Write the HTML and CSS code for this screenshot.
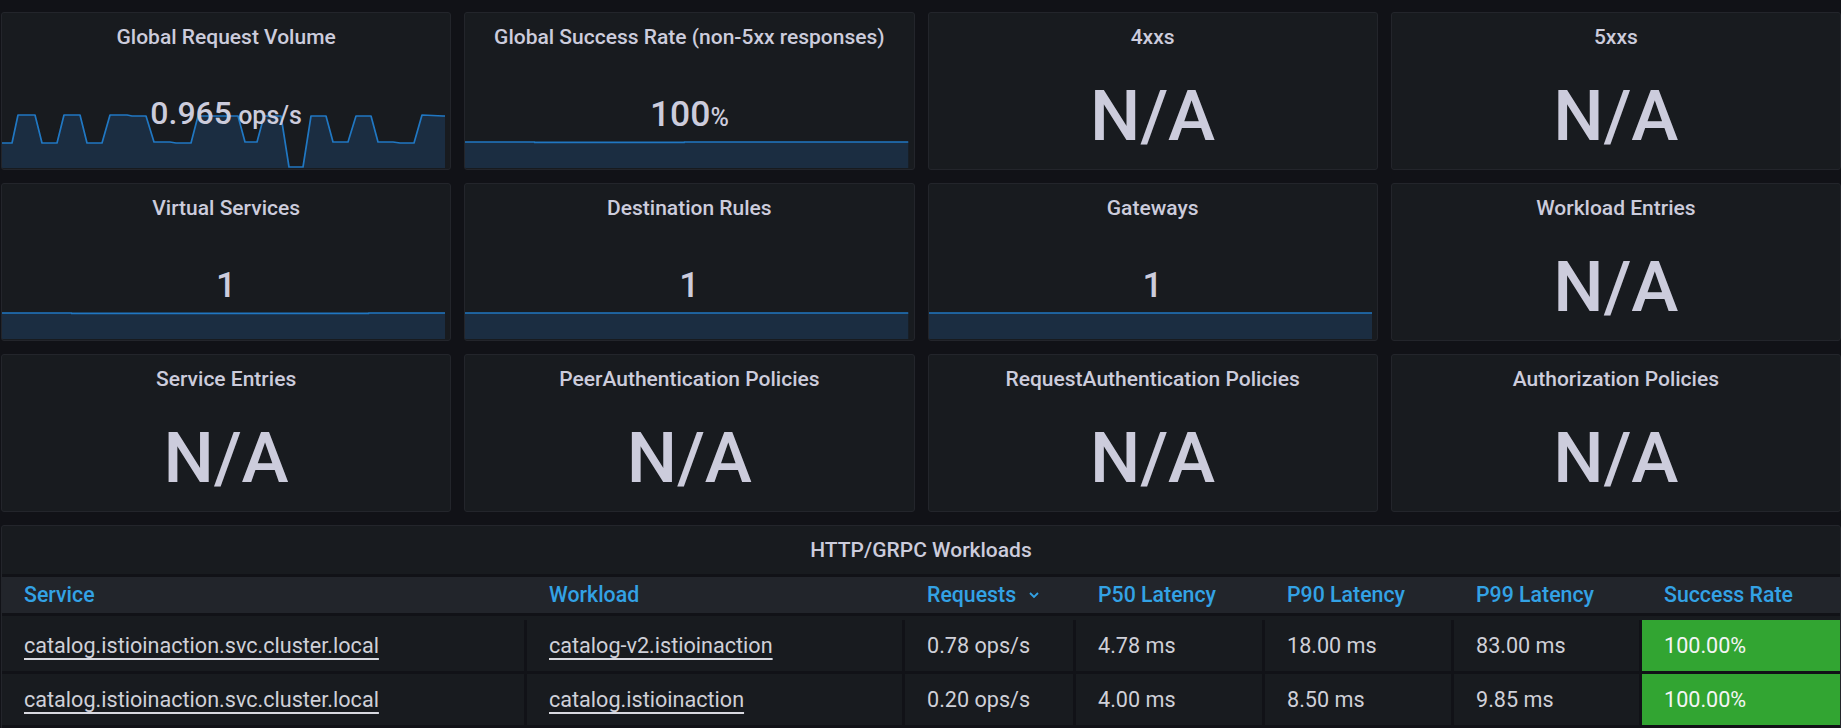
FILE: index.html
```html
<!DOCTYPE html>
<html lang="en">
<head>
<meta charset="utf-8">
<title>Istio Mesh Dashboard</title>
<link rel="stylesheet" href="styles.css">
</head>
<body>
<div class="dash">
  <div class="grid">
    <section class="panel">
      <div class="title">Global Request Volume</div>
      <svg class="graph g-spark" viewBox="0 0 443 56" preserveAspectRatio="none">
        <polygon class="fill" points="0,56 0,31 10,31 16,3 33,3 40,31 55,31 62,3 78,3 85,31 100,31 108,3 125,3 130,4 144,4 152,30 168,30 174,31 189,31 196,4 236,4 243,30 255,30 262,4 279,4 287,56 301,56 309,4 324,4 331,30 346,30 354,4 369,4 376,30 391,30 398,31 412,31 420,3 441,4 443,4 443,56"/>
        <polyline class="line" points="0,31 10,31 16,3 33,3 40,31 55,31 62,3 78,3 85,31 100,31 108,3 125,3 130,4 144,4 152,30 168,30 174,31 189,31 196,4 236,4 243,30 255,30 262,4 279,4 287,55 301,55 309,4 324,4 331,30 346,30 354,4 369,4 376,30 391,30 398,31 412,31 420,3 441,4 443,4"/>
      </svg>
      <div class="value v-spark">0.965<span class="unit-ops"> ops/s</span></div>
    </section>
    <section class="panel">
      <div class="title">Global Success Rate (non-5xx responses)</div>
      <svg class="graph g-flat" viewBox="0 0 445 56" preserveAspectRatio="none">
        <rect class="fill" x="0" y="30" width="445" height="26"/>
        <polyline class="line" points="0,30 70,30 70,30.4 220,30.4 220,30 445,30"/>
      </svg>
      <div class="value v-big">100<span class="unit-pct">%</span></div>
    </section>
    <section class="panel">
      <div class="title">4xxs</div>
      <div class="value na">N/A</div>
    </section>
    <section class="panel">
      <div class="title">5xxs</div>
      <div class="value na">N/A</div>
    </section>

    <section class="panel">
      <div class="title">Virtual Services</div>
      <svg class="graph g-flat" viewBox="0 0 445 56" preserveAspectRatio="none">
        <rect class="fill" x="0" y="30" width="445" height="26"/>
        <polyline class="line" points="0,30 70,30 70,30.4 368,30.4 368,30 445,30"/>
      </svg>
      <div class="value v-big">1</div>
    </section>
    <section class="panel">
      <div class="title">Destination Rules</div>
      <svg class="graph g-flat" viewBox="0 0 445 56" preserveAspectRatio="none">
        <rect class="fill" x="0" y="30" width="445" height="26"/>
        <polyline class="line" points="0,30 445,30"/>
      </svg>
      <div class="value v-big">1</div>
    </section>
    <section class="panel">
      <div class="title">Gateways</div>
      <svg class="graph g-flat" viewBox="0 0 445 56" preserveAspectRatio="none">
        <rect class="fill" x="0" y="30" width="445" height="26"/>
        <polyline class="line" points="0,30 445,30"/>
      </svg>
      <div class="value v-big">1</div>
    </section>
    <section class="panel">
      <div class="title">Workload Entries</div>
      <div class="value na">N/A</div>
    </section>

    <section class="panel">
      <div class="title">Service Entries</div>
      <div class="value na">N/A</div>
    </section>
    <section class="panel">
      <div class="title">PeerAuthentication Policies</div>
      <div class="value na">N/A</div>
    </section>
    <section class="panel">
      <div class="title">RequestAuthentication Policies</div>
      <div class="value na">N/A</div>
    </section>
    <section class="panel">
      <div class="title">Authorization Policies</div>
      <div class="value na">N/A</div>
    </section>
  </div>

  <section class="panel table-panel">
    <div class="title table-title">HTTP/GRPC Workloads</div>
    <div class="thead cols">
      <div class="th">Service</div>
      <div class="th">Workload</div>
      <div class="th">Requests<svg class="chev" width="10" height="7" viewBox="0 0 10 7"><polyline points="1,1 5,5 9,1"/></svg></div>
      <div class="th">P50 Latency</div>
      <div class="th">P90 Latency</div>
      <div class="th">P99 Latency</div>
      <div class="th">Success Rate</div>
    </div>
    <div class="tbody">
      <div class="tr cols">
        <div class="td"><span class="link">catalog.istioinaction.svc.cluster.local</span></div>
        <div class="td"><span class="link">catalog-v2.istioinaction</span></div>
        <div class="td">0.78 ops/s</div>
        <div class="td">4.78 ms</div>
        <div class="td">18.00 ms</div>
        <div class="td">83.00 ms</div>
        <div class="td ok">100.00%</div>
      </div>
      <div class="tr cols">
        <div class="td"><span class="link">catalog.istioinaction.svc.cluster.local</span></div>
        <div class="td"><span class="link">catalog.istioinaction</span></div>
        <div class="td">0.20 ops/s</div>
        <div class="td">4.00 ms</div>
        <div class="td">8.50 ms</div>
        <div class="td">9.85 ms</div>
        <div class="td ok">100.00%</div>
      </div>
    </div>
  </section>
</div>
</body>
</html>
```
FILE: styles.css
```css
* { box-sizing: border-box; }

html, body {
  margin: 0;
  background: #111217;
  overflow: hidden;
}

body {
  font-family: Roboto, "Liberation Sans", sans-serif;
  color: #ccccdc;
}

.dash {
  width: 1841px;
  padding: 12px 0 0 1px;
}

.grid {
  display: grid;
  grid-template-columns: repeat(4, 1fr);
  grid-auto-rows: 158px;
  gap: 13px;
}

.panel {
  position: relative;
  background: #181b1f;
  border: 1px solid #23252b;
  border-radius: 3px;
  overflow: hidden;
}

.title {
  position: relative;
  z-index: 1;
  padding-top: 12px;
  font-size: 21px;
  line-height: 24px;
  font-weight: 500;
  text-align: center;
  white-space: nowrap;
}

.value {
  position: relative;
  z-index: 1;
  text-align: center;
  font-weight: 500;
  white-space: nowrap;
}

.na {
  font-size: 71px;
  line-height: 73px;
  margin-top: 30px;
}

.v-spark {
  font-size: 32px;
  line-height: 32px;
  margin-top: 48px;
}

.v-big {
  font-size: 35.5px;
  line-height: 35px;
  margin-top: 48px;
}

.unit-ops { font-size: 25px; }
.unit-pct { font-size: 25px; }

.graph {
  position: absolute;
  left: 0;
  bottom: 1px;
  height: 56px;
}

.g-spark { width: 443px; }
.g-flat { width: calc(100% - 5px); }

.graph .fill { fill: #1b2d41; stroke: none; }
.graph .line {
  fill: none;
  stroke: #2077c2;
  stroke-width: 1.7;
  stroke-linejoin: round;
  vector-effect: non-scaling-stroke;
}

/* table panel */
.table-panel {
  margin-top: 13px;
  height: 230px;
}

.table-title {
  padding-bottom: 12px;
}

.cols {
  display: grid;
  grid-template-columns: 522px 375px 168px 186px 186px 185px 1fr;
  column-gap: 3px;
}

.thead {
  background: #22252b;
  border-top: 3px solid #111217;
  border-bottom: 3px solid #111217;
}

.th {
  padding-left: 22px;
  font-size: 21.3px;
  line-height: 36px;
  font-weight: 500;
  color: #33a2e5;
  white-space: nowrap;
}

.chev {
  margin-left: 13px;
  vertical-align: 3px;
}

.chev polyline {
  fill: none;
  stroke: #33a2e5;
  stroke-width: 1.8;
}

.tbody {
  display: grid;
  row-gap: 3px;
  background: #111217;
  border-top: 4px solid #181b1f;
  padding-bottom: 3px;
}

.td {
  background: #181b1f;
  padding-left: 22px;
  height: 51px;
  font-size: 21.6px;
  line-height: 51px;
  white-space: nowrap;
  color: #cfd0d8;
}

.td.ok {
  background: #32a532;
  color: #f4f5f5;
}

.link {
  text-decoration: underline;
  text-decoration-thickness: 2px;
  text-underline-offset: 5px;
  text-decoration-color: #d8d9e0;
}
```
